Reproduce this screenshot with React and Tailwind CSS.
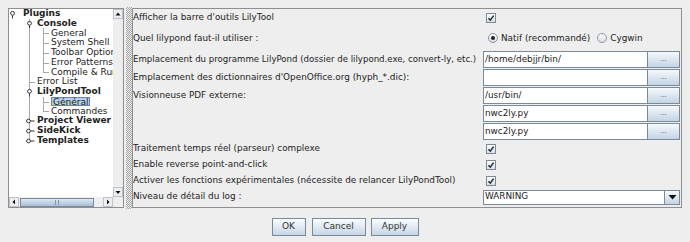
import React from "react";

const tree = [
    { label: "Plugins", depth: 0, bold: true, handle: "open" },
    { label: "Console", depth: 1, bold: true, handle: "open" },
    { label: "General", depth: 2 },
    { label: "System Shell", depth: 2 },
    { label: "Toolbar Options", depth: 2 },
    { label: "Error Patterns", depth: 2 },
    { label: "Compile & Run", depth: 2, last: true },
    { label: "Error List", depth: 1 },
    { label: "LilyPondTool", depth: 1, bold: true, handle: "open" },
    { label: "Général", depth: 2, selected: true },
    { label: "Commandes", depth: 2, last: true },
    { label: "Project Viewer", depth: 1, bold: true, handle: "closed" },
    { label: "SideKick", depth: 1, bold: true, handle: "closed" },
    { label: "Templates", depth: 1, bold: true, handle: "closed", lastTop: true },
];

const LINE = "#a8a8a8";
const INK = "#2b3440";

function Handle({ x, type }) {
    if (type === "open") {
        return (
            <g>
                <line x1={x} y1={6.5} x2={x} y2={9.5} stroke={INK} strokeWidth="1" />
                <circle cx={x} cy={4.3} r={1.9} fill="#fff" stroke={INK} strokeWidth="1" />
            </g>
        );
    }
    return (
        <g>
            <line x1={x + 1} y1={5} x2={x + 5} y2={5} stroke={INK} strokeWidth="1" />
            <circle cx={x - 1} cy={5} r={1.9} fill="#fff" stroke={INK} strokeWidth="1" />
        </g>
    );
}

function TreeRow({ node }) {
    const w = 14 + node.depth * 14;
    return (
        <div className="flex h-[9.75px] items-center whitespace-nowrap">
            <svg width={w} height="10" className="shrink-0">
                {node.depth >= 1 && (
                    <line x1="20.5" y1="0" x2="20.5" y2={node.lastTop ? 5 : 10} stroke={LINE} />
                )}
                {node.depth === 1 && !node.handle && (
                    <line x1="20" y1="5.5" x2="26" y2="5.5" stroke={LINE} />
                )}
                {node.depth === 2 && (
                    <>
                        <line x1="34.5" y1="0" x2="34.5" y2={node.last ? 5.5 : 10} stroke={LINE} />
                        <line x1="34" y1="5.5" x2="40" y2="5.5" stroke={LINE} />
                    </>
                )}
                {node.depth === 0 && <Handle x={3.5} type={node.handle} />}
                {node.depth === 1 && node.handle && <Handle x={20.5} type={node.handle} />}
            </svg>
            <span
                className={
                    (node.bold ? "font-bold " : "") +
                    (node.selected
                        ? "bg-[#b8cfe5] border border-[#6382bf] px-[1px] leading-[8px] h-[9px]"
                        : "px-[0px]")
                }
            >
                {node.label}
            </span>
        </div>
    );
}

function Arrow({ dir }) {
    const pts = {
        up: "1.5,5.5 6.5,5.5 4,2.5",
        down: "1.5,3 6.5,3 4,6",
        left: "5,1.5 5,6.5 2.5,4",
        right: "3,1.5 3,6.5 5.5,4",
    }[dir];
    return (
        <svg width="8" height="8">
            <polygon points={pts} fill="#111" />
        </svg>
    );
}

function ScrollBtn({ dir }) {
    return (
        <div className="flex h-[10px] w-[10px] items-center justify-center border border-[#b8c3cf] bg-[#eeeeee]">
            <Arrow dir={dir} />
        </div>
    );
}

function Checkbox() {
    return (
        <div className="flex h-[10px] w-[10px] items-center justify-center border border-[#7a8a99] bg-gradient-to-b from-[#ffffff] to-[#d9dee5]">
            <svg width="8" height="8">
                <path d="M1.5 4.2 L3.3 6.2 L6.6 1.6" fill="none" stroke="#222" strokeWidth="1.4" />
            </svg>
        </div>
    );
}

function Radio({ checked }) {
    return (
        <div className="flex h-[10px] w-[10px] items-center justify-center rounded-full border border-[#8c96a1] bg-gradient-to-b from-[#ffffff] to-[#d9dee5]">
            {checked && <div className="h-[4px] w-[4px] rounded-full bg-[#222]" />}
        </div>
    );
}

function Field({ value }) {
    return (
        <div className="flex h-[17px] items-center">
            <div className="flex h-full w-[165px] items-center border border-[#7a8a99] bg-white pl-[1px]">
                {value}
            </div>
            <div className="flex h-full w-[32px] items-center justify-center border border-l-0 border-[#7a8a99] bg-gradient-to-b from-[#f6f9fc] to-[#c3d4e5] text-[7px] text-[#555]">
                ...
            </div>
        </div>
    );
}

function Row({ label, h, children, labelClass = "" }) {
    return (
        <div className={"flex items-center " + h}>
            <div className={"w-[350px] shrink-0 overflow-hidden whitespace-nowrap " + labelClass}>
                {label}
            </div>
            <div className="flex flex-1 items-center">{children}</div>
        </div>
    );
}

function DialogButton({ children, w }) {
    return (
        <div
            className={
                "flex h-[18px] items-center justify-center border border-[#7a8a99] bg-gradient-to-b from-[#fbfdff] to-[#c6d6e6] text-[#333] " +
                w
            }
        >
            {children}
        </div>
    );
}

export default function App() {
    return (
        <div className="h-[242px] w-[690px] overflow-hidden bg-[#eeeeee] font-['DejaVu_Sans',sans-serif] text-[9px] text-[#222]">
            <div className="flex pl-[8px] pt-[8px]">
                {/* Tree pane */}
                <div className="flex h-[200px] w-[116px] flex-col border border-[#8f8f8f] bg-white">
                    <div className="flex h-[188px]">
                        <div className="w-[104px] overflow-hidden">
                            {tree.map((n) => (
                                <TreeRow key={n.label} node={n} />
                            ))}
                        </div>
                        <div className="flex w-[10px] flex-col justify-between bg-[#eeeeee]">
                            <ScrollBtn dir="up" />
                            <ScrollBtn dir="down" />
                        </div>
                    </div>
                    <div className="flex h-[10px]">
                        <div className="flex w-[104px] items-center bg-[#eeeeee]">
                            <ScrollBtn dir="left" />
                            <div className="flex h-[10px] flex-1 items-center">
                                <div className="ml-[1px] flex h-[9px] w-[74px] items-center justify-center border border-[#7a8a99] bg-gradient-to-b from-[#dde8f3] to-[#a9c0d8]">
                                    <div className="h-[5px] w-[4px] border-x border-[#7f95ad]" />
                                </div>
                            </div>
                            <ScrollBtn dir="right" />
                        </div>
                        <div className="w-[10px] bg-[#eeeeee]" />
                    </div>
                </div>

                {/* Splitter */}
                <div className="ml-[2px] h-[202px] w-[6px] -mt-[1px] bg-[repeating-conic-gradient(#a6a6a6_0_25%,#eeeeee_0_50%)] bg-[length:2px_2px]" />

                {/* Options panel */}
                <div className="flex h-[200px] w-[550px] flex-col border border-[#8f8f8f] pr-[1px] text-[8.85px]">
                    <Row label="Afficher la barre d'outils LilyTool" h="h-[18px]">
                        <div className="ml-[3px]">
                            <Checkbox />
                        </div>
                    </Row>
                    <Row label="Quel lilypond faut-il utiliser :" h="h-[23px]">
                        <div className="ml-[5px] flex items-center gap-[3px]">
                            <Radio checked />
                            <span>Natif (recommandé)</span>
                        </div>
                        <div className="ml-[7px] flex items-center gap-[3px]">
                            <Radio />
                            <span>Cygwin</span>
                        </div>
                    </Row>
                    <div className="mt-[1px] flex flex-col gap-[1px]">
                        <Row
                            label="Emplacement du programme LilyPond (dossier de lilypond.exe, convert-ly, etc.)"
                            h="h-[17px]"
                            labelClass="text-[8.6px]"
                        >
                            <Field value="/home/debjjr/bin/" />
                        </Row>
                        <Row
                            label="Emplacement des dictionnaires d'OpenOffice.org (hyph_*.dic):"
                            h="h-[17px]"
                        >
                            <Field value="" />
                        </Row>
                        <Row label="Visionneuse PDF externe:" h="h-[17px]">
                            <Field value="/usr/bin/" />
                        </Row>
                        <Row label="" h="h-[17px]">
                            <Field value="nwc2ly.py" />
                        </Row>
                        <Row label="" h="h-[17px]">
                            <Field value="nwc2ly.py" />
                        </Row>
                    </div>
                    <Row label="Traitement temps réel (parseur) complexe" h="h-[16px] pt-[1px]">
                        <div className="ml-[3px]">
                            <Checkbox />
                        </div>
                    </Row>
                    <Row label="Enable reverse point-and-click" h="h-[16px] pt-[1px]">
                        <div className="ml-[3px]">
                            <Checkbox />
                        </div>
                    </Row>
                    <Row
                        label="Activer les fonctions expérimentales (nécessite de relancer LilyPondTool)"
                        h="h-[16px] pt-[1px]"
                    >
                        <div className="ml-[3px]">
                            <Checkbox />
                        </div>
                    </Row>
                    <Row label="Niveau de détail du log :" h="h-[17px] pt-[1px]">
                        <div className="flex h-[15px] w-[197px] items-center border border-[#7a8a99] bg-white">
                            <div className="flex-1 pl-[1px]">WARNING</div>
                            <div className="flex h-full w-[15px] items-center justify-center border-l border-[#7a8a99] bg-gradient-to-b from-[#f6f9fc] to-[#c3d4e5]">
                                <svg width="9" height="6">
                                    <polygon points="0.5,1 8.5,1 4.5,5.5" fill="#111" />
                                </svg>
                            </div>
                        </div>
                    </Row>
                </div>
            </div>

            {/* Dialog buttons */}
            <div className="mt-[9px] flex justify-center gap-[5px]">
                <DialogButton w="w-[34px]">OK</DialogButton>
                <DialogButton w="w-[54px] ml-[1px]">Cancel</DialogButton>
                <DialogButton w="w-[48px]">Apply</DialogButton>
            </div>
        </div>
    );
}
